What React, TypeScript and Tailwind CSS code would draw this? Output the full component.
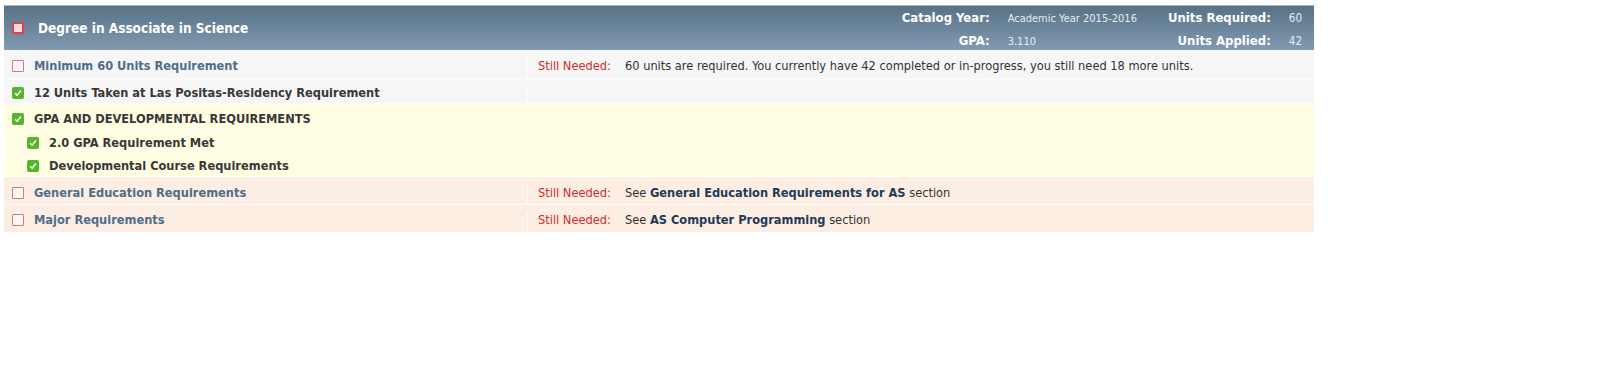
import type { ReactNode } from "react";

const font = "font-['DejaVu_Sans_Condensed','DejaVu_Sans',sans-serif] font-stretch-condensed";

function Box({ checked, header }: { checked?: boolean; header?: boolean }) {
  if (header) {
    return <span className="inline-block w-[12px] h-[12px] shrink-0 rounded-[1px] border-2 border-[#d9444a] bg-[#f7dcdd]" />;
  }
  if (checked) {
    return (
      <span className="inline-flex w-[12px] h-[12px] mt-[2px] shrink-0 items-center justify-center rounded-[2px] bg-[#57b42c]">
        <svg viewBox="0 0 12 12" className="w-[10px] h-[10px]">
          <path d="M2.5 6.2 L5 8.6 L9.5 3" fill="none" stroke="#ffffff" strokeWidth="1.8" />
        </svg>
      </span>
    );
  }
  return <span className="inline-block w-[12px] h-[12px] mt-[2px] shrink-0 rounded-[1px] border-[1.5px] border-[#d27a7e] bg-[#fff6f6]" />;
}

type Row = {
  label: string;
  checked: boolean;
  indent?: boolean;
  link?: boolean;
  bg: string;
  h: string;
  detail?: ReactNode;
};

const rows: Row[] = [
  {
    label: "Minimum 60 Units Requirement",
    checked: false,
    link: true,
    bg: "bg-[#f6f6f6]",
    h: "h-[30px] pt-[8px]",
    detail: "60 units are required. You currently have 42 completed or in-progress, you still need 18 more units.",
  },
  { label: "12 Units Taken at Las Positas-Residency Requirement", checked: true, bg: "bg-[#f6f6f6]", h: "h-[24px] pt-[5px]" },
  { label: "GPA AND DEVELOPMENTAL REQUIREMENTS", checked: true, bg: "bg-[#fffde2]", h: "h-[26px] pt-[7px]" },
  { label: "2.0 GPA Requirement Met", checked: true, indent: true, bg: "bg-[#fffde2]", h: "h-[23px] pt-[5px]" },
  { label: "Developmental Course Requirements", checked: true, indent: true, bg: "bg-[#fffde2]", h: "h-[24px] pt-[5px]" },
  {
    label: "General Education Requirements",
    checked: false,
    link: true,
    bg: "bg-[#fdeee3]",
    h: "h-[28px] pt-[8px]",
    detail: (
      <>
        See <b className="text-[#1f3a58]">General Education Requirements for AS</b> section
      </>
    ),
  },
  {
    label: "Major Requirements",
    checked: false,
    link: true,
    bg: "bg-[#fdeee3]",
    h: "h-[28px] pt-[7px]",
    detail: (
      <>
        See <b className="text-[#1f3a58]">AS Computer Programming</b> section
      </>
    ),
  },
];

export default function App() {
  return (
    <div className={`min-h-[392px] bg-white pt-[5px] pl-[4px] ${font}`}>
      <div className="w-[1310px]">
        <div className="flex items-center h-[45px] border-t border-[#a7b8c6] bg-gradient-to-b from-[#587288] to-[#819aaf] pl-[8px] pr-[12px]">
          <Box header />
          <span className="ml-[14px] text-[13.5px] font-bold text-white">Degree in Associate in Science</span>
          <div className="ml-auto pt-[3px] grid grid-cols-[auto_auto_auto_auto] items-baseline gap-x-[18px] gap-y-[6px] leading-[16px]">
            <span className="text-right text-[13px] font-bold text-white">Catalog Year:</span>
            <span className="pr-[13px] text-[11px] text-[#e6edf3]">Academic Year 2015-2016</span>
            <span className="text-right text-[13px] font-bold text-white">Units Required:</span>
            <span className="text-[11.5px] text-[#e6edf3]">60</span>
            <span className="text-right text-[13px] font-bold text-white">GPA:</span>
            <span className="pr-[13px] text-[11px] text-[#e6edf3]">3.110</span>
            <span className="text-right text-[13px] font-bold text-white">Units Applied:</span>
            <span className="text-[11.5px] text-[#e6edf3]">42</span>
          </div>
        </div>
        {rows.map((r, i) => (
          <div key={i} className={`grid grid-cols-[523px_1fr] border-b border-white/70 text-[12.7px] leading-[16px] ${r.bg} ${r.h}`}>
            <div className={`flex items-start gap-[10px] ${r.indent ? "pl-[23px]" : "pl-[8px]"}`}>
              <Box checked={r.checked} />
              <span className={`font-bold ${r.link ? "text-[#4f6d8b]" : "text-[#383838]"}`}>{r.label}</span>
            </div>
            <div className="flex items-start border-l border-white/70 pl-[10px] text-[#333333]">
              {r.detail && (
                <>
                  <span className="w-[87px] shrink-0 text-[#cc2e33]">Still Needed:</span>
                  <span>{r.detail}</span>
                </>
              )}
            </div>
          </div>
        ))}
      </div>
    </div>
  );
}
